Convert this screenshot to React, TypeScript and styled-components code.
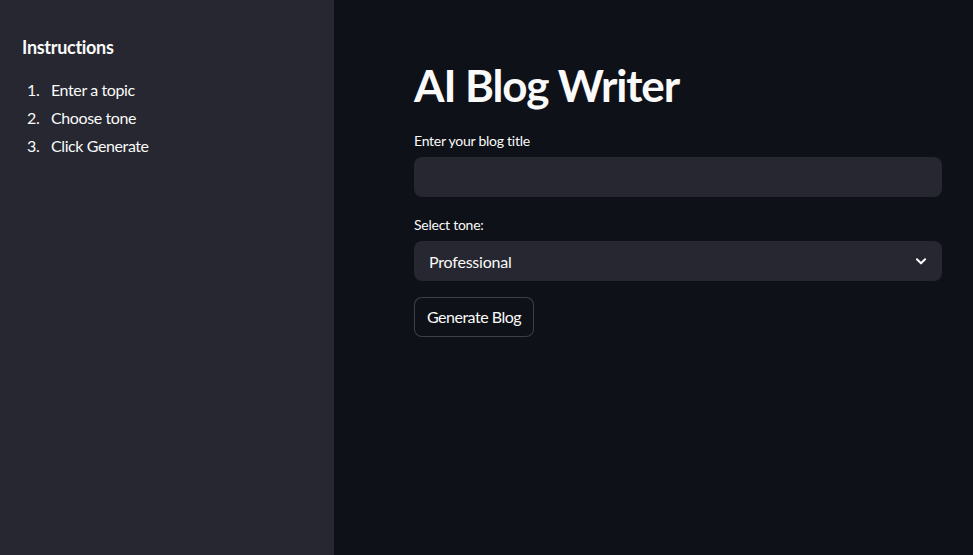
import React from "react";
import styled, { createGlobalStyle } from "styled-components";

const Global = createGlobalStyle`
  html, body { margin: 0; padding: 0; background: #0e1117; }
  body { font-family: Lato, "Noto Sans", sans-serif; color: #fafafa; }
  * { box-sizing: border-box; }
`;

const Page = styled.div`
  display: flex;
  width: 973px;
  height: 555px;
  overflow: hidden;
`;

const Sidebar = styled.aside`
  width: 334px;
  flex: none;
  background: #262730;
  padding: 36px 22px 0 22px;
`;

const SideTitle = styled.h3`
  margin: 0;
  font-size: 18px;
  font-weight: 700;
  line-height: 22px;
  letter-spacing: -0.3px;
  color: #fafafa;
`;

const List = styled.ol`
  list-style: none;
  margin: 22px 0 0 0;
  padding: 0;
  display: flex;
  flex-direction: column;
  gap: 8px;
`;

const Item = styled.li`
  display: flex;
  font-size: 16px;
  line-height: 20px;
  letter-spacing: -0.4px;
  color: #fafafa;
`;

const Num = styled.span`
  width: 29px;
  padding-left: 5px;
  flex: none;
`;

const Main = styled.main`
  flex: 1;
  padding: 59px 31px 0 80px;
  display: flex;
  flex-direction: column;
`;

const Title = styled.h1`
  margin: 0;
  font-size: 44px;
  font-weight: 700;
  line-height: 52px;
  letter-spacing: -1.1px;
  color: #fafafa;
`;

const Label = styled.label<{ $top: number }>`
  display: block;
  margin-top: ${(p) => p.$top}px;
  font-size: 14px;
  line-height: 20px;
  letter-spacing: -0.25px;
  color: #fafafa;
`;

const Input = styled.input`
  margin-top: 6px;
  height: 40px;
  width: 100%;
  border: none;
  outline: none;
  border-radius: 8px;
  background: #262730;
  color: #fafafa;
  font: inherit;
  padding: 0 15px;
`;

const Select = styled.div`
  margin-top: 6px;
  height: 40px;
  border-radius: 8px;
  background: #262730;
  display: flex;
  align-items: center;
  justify-content: space-between;
  padding: 0 14px 0 15px;
  font-size: 16px;
  letter-spacing: -0.2px;
`;

const Button = styled.button`
  margin-top: 16px;
  align-self: flex-start;
  height: 40px;
  padding: 0 12px 2px;
  border-radius: 8px;
  background: #0e1117;
  border: 1px solid rgba(250, 250, 250, 0.2);
  color: #fafafa;
  font-family: inherit;
  font-size: 16px;
  letter-spacing: -0.5px;
`;

export default function App() {
  return (
    <>
      <Global />
      <Page>
        <Sidebar>
          <SideTitle>Instructions</SideTitle>
          <List>
            <Item><Num>1.</Num>Enter a topic</Item>
            <Item><Num>2.</Num>Choose tone</Item>
            <Item><Num>3.</Num>Click Generate</Item>
          </List>
        </Sidebar>
        <Main>
          <Title>AI Blog Writer</Title>
          <Label $top={20}>Enter your blog title</Label>
          <Input />
          <Label $top={18}>Select tone:</Label>
          <Select>
            <span>Professional</span>
            <svg width="14" height="14" viewBox="0 0 24 24" fill="none" stroke="#fafafa" strokeWidth="3.5" strokeLinecap="round" strokeLinejoin="round">
              <path d="M5 9l7 7 7-7" />
            </svg>
          </Select>
          <Button>Generate Blog</Button>
        </Main>
      </Page>
    </>
  );
}
